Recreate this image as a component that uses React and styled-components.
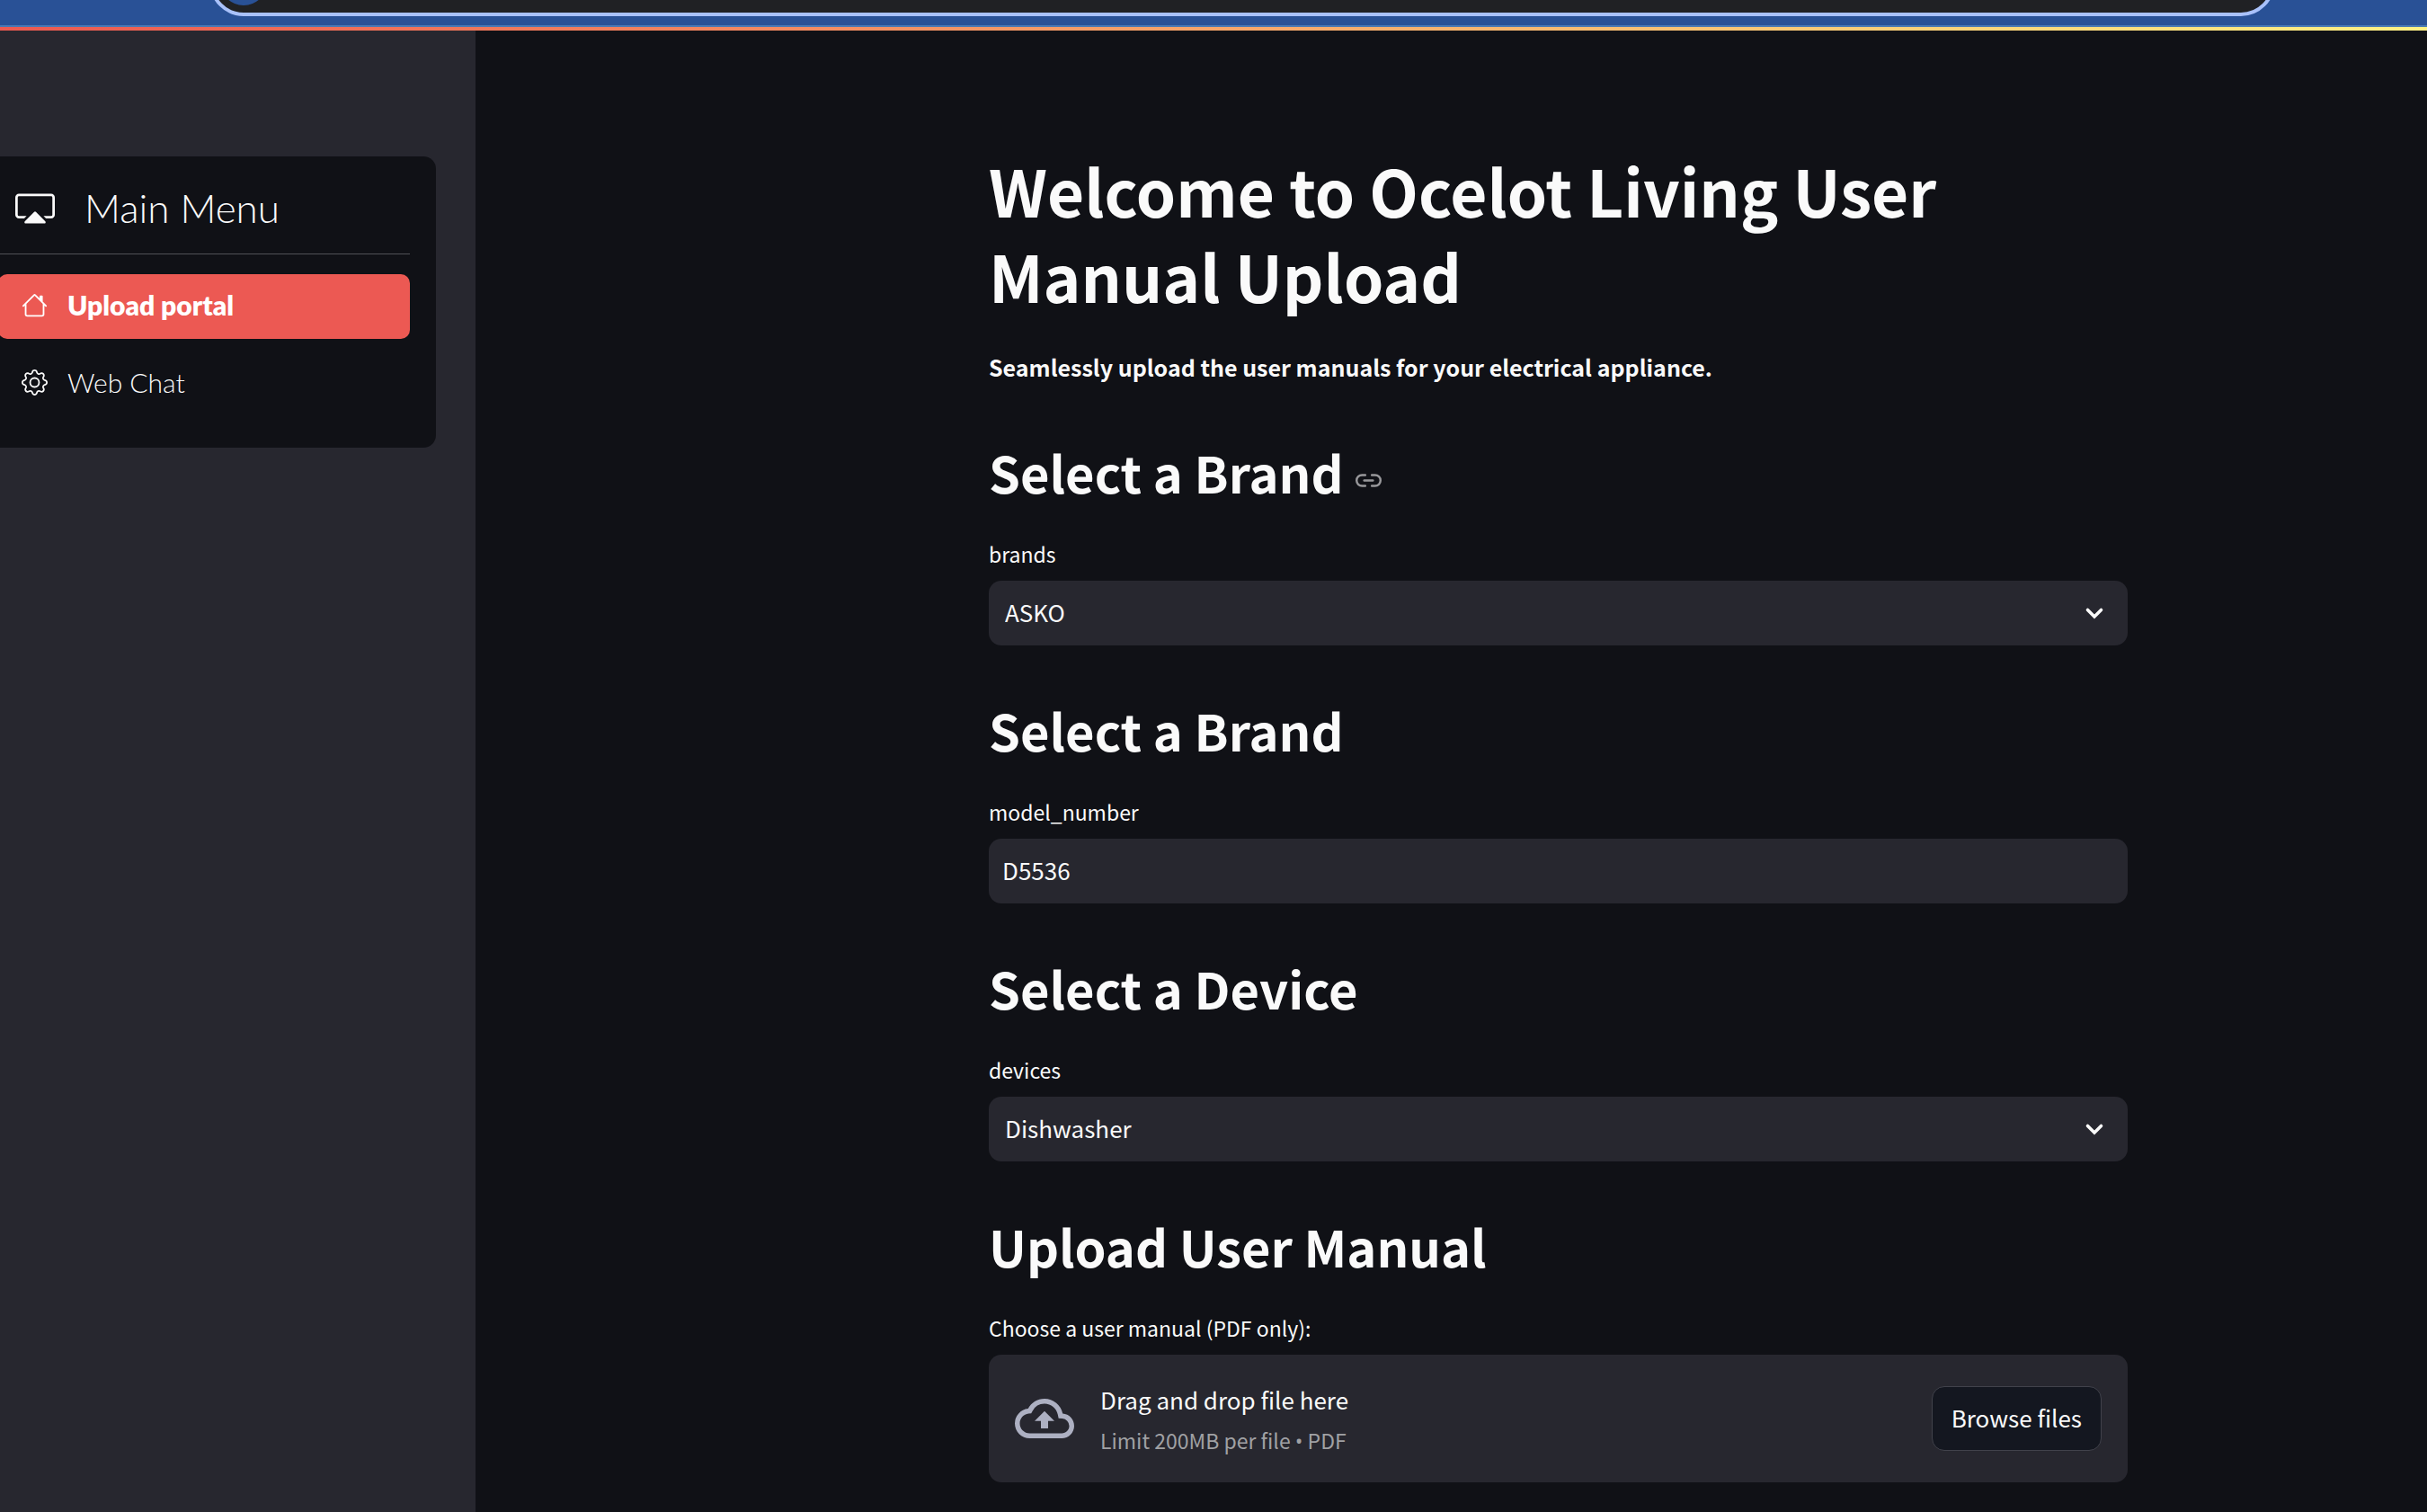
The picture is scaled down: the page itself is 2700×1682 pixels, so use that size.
import React, { useRef } from "react";
import styled, { createGlobalStyle } from "styled-components";
import { BsCast, BsHouse, BsGear } from "react-icons/bs";
import { FiLink2 } from "react-icons/fi";
import { MdOutlineCloudUpload } from "react-icons/md";

const color = {
  page: "#101116",
  panel: "#27272f",
  text: "#fafafa",
  muted: "#a0a1a4",
  icon: "#adb0c2",
  accent: "#ec5953",
  chrome: "#295196",
};

const bodyFont = `"Noto Sans CJK SC", "Open Sans", sans-serif`;
const menuFont = `Lato, "Open Sans", sans-serif`;

const GlobalStyle = createGlobalStyle`
  *, *::before, *::after { box-sizing: border-box; }
  body {
    margin: 0;
    background: ${color.page};
    color: ${color.text};
    font-family: ${bodyFont};
    font-size: 26px;
    line-height: 46px;
  }
  h1, h2, p, ul { margin: 0; padding: 0; }
`;

const Page = styled.div`
  display: flex;
  flex-direction: column;
  min-height: 100vh;
`;

const BrowserBar = styled.header`
  display: flex;
  align-items: flex-end;
  height: 30px;
  padding: 0 169px 10px 233px;
  overflow: hidden;
  background: ${color.chrome};
  border-bottom: 2px solid #4878b4;
`;

const AddressPill = styled.div`
  flex: 1;
  height: 76px;
  padding: 8px;
  border: 4px solid #a9c1fa;
  border-radius: 38px;
  background: #202124;
`;

const SiteBadge = styled.div`
  width: 52px;
  height: 52px;
  border-radius: 50%;
  background: ${color.chrome};
`;

const Decoration = styled.div`
  height: 4px;
  background: linear-gradient(90deg, #ed5950, #fff184);
`;

const Columns = styled.div`
  display: flex;
  flex: 1;
`;

const Sidebar = styled.aside`
  flex: 0 0 529px;
  padding: 140px 44px 0 0;
  background: ${color.panel};
`;

const Menu = styled.nav`
  display: flex;
  flex-direction: column;
  padding: 23px 29px 35px 0;
  border-radius: 0 14px 14px 0;
  background: ${color.page};
  font-family: ${menuFont};
`;

const MenuTitle = styled.div`
  display: flex;
  align-items: center;
  gap: 33px;
  padding: 4px 0 20px 17px;
  border-bottom: 1px solid #505156;
  font-size: 44px;
  font-weight: 300;
  line-height: 61px;
`;

const MenuList = styled.ul`
  display: flex;
  flex-direction: column;
  gap: 14px;
  margin: 22px 0 0 -2px;
  list-style: none;
`;

const MenuLink = styled.a`
  display: flex;
  align-items: center;
  gap: 22px;
  height: 72px;
  padding: 0 26px 4px;
  border-radius: 10px;
  background: ${(p) => (p.$active ? color.accent : "transparent")};
  color: ${(p) => (p.$active ? "#ffffff" : color.text)};
  font-size: 30px;
  font-weight: ${(p) => (p.$active ? 800 : 300)};
  text-decoration: none;
`;

const Main = styled.main`
  display: flex;
  flex: 1;
  flex-direction: column;
  gap: 55px;
  min-width: 0;
  padding: 130px 333px 32px 571px;
`;

const Intro = styled.header`
  display: flex;
  flex-direction: column;
  gap: 31px;
`;

const Title = styled.h1`
  font-size: 71px;
  font-weight: 700;
  line-height: 95px;
`;

const Lead = styled.p`
  font-size: 25px;
  font-weight: 700;
`;

const Section = styled.section`
  display: flex;
  flex-direction: column;
`;

const Heading = styled.h2`
  display: flex;
  align-items: center;
  gap: 14px;
  margin-bottom: 32px;
  font-size: 56px;
  font-weight: 600;
  line-height: 78px;
`;

const AnchorLink = styled.a`
  display: flex;
  padding-top: 18px;
  color: #98989b;
`;

const Label = styled.label`
  margin-bottom: 10px;
  font-size: 23px;
  line-height: 40px;
`;

const SelectBox = styled.div`
  display: grid;
  align-items: center;
  & > * { grid-area: 1 / 1; }
  & > svg {
    justify-self: end;
    margin-right: 26px;
    pointer-events: none;
  }
`;

const control = `
  width: 100%;
  height: 72px;
  border: 0;
  border-radius: 14px;
  background: ${color.panel};
  color: ${color.text};
  font: inherit;
  outline: none;
`;

const Select = styled.select`
  ${control}
  appearance: none;
  padding: 0 18px 3px;
`;

const TextInput = styled.input`
  ${control}
  padding: 0 15px 3px;
`;

const Dropzone = styled.div`
  display: flex;
  align-items: center;
  gap: 29px;
  height: 142px;
  padding: 0 29px;
  border-radius: 14px;
  background: ${color.panel};
  & > svg { flex: none; color: ${color.icon}; }
`;

const DropText = styled.div`
  display: flex;
  flex: 1;
  flex-direction: column;
  gap: 2px;
`;

const Hint = styled.p`
  color: ${color.muted};
  font-size: 23px;
  line-height: 40px;
`;

const Bullet = styled.span`
  font-family: "Open Sans", sans-serif;
`;

const BrowseButton = styled.button`
  height: 72px;
  padding: 0 21px 3px;
  border: 1px solid #41424b;
  border-radius: 14px;
  background: #141720;
  color: ${color.text};
  font: inherit;
`;

function Chevron() {
  return (
    <svg width="22" height="16" viewBox="0 0 22 16" fill="none" aria-hidden="true">
      <path d="M3.5 4.5 11 12l7.5-7.5" stroke="#fafafa" strokeWidth="3.6" strokeLinecap="round" />
    </svg>
  );
}

function SelectSection({ title, anchor, name, value }) {
  return (
    <Section>
      <Heading>
        {title}
        {anchor && (
          <AnchorLink href="#select-a-brand" aria-label="Link to heading">
            <FiLink2 size={29} />
          </AnchorLink>
        )}
      </Heading>
      <Label htmlFor={name}>{name}</Label>
      <SelectBox>
        <Select id={name} defaultValue={value}>
          <option>{value}</option>
        </Select>
        <Chevron />
      </SelectBox>
    </Section>
  );
}

export default function App() {
  const fileInput = useRef(null);
  return (
    <Page>
      <GlobalStyle />
      <BrowserBar>
        <AddressPill>
          <SiteBadge />
        </AddressPill>
      </BrowserBar>
      <Decoration />
      <Columns>
        <Sidebar>
          <Menu>
            <MenuTitle>
              <BsCast size={44} />
              Main Menu
            </MenuTitle>
            <MenuList>
              <li>
                <MenuLink href="#upload" $active>
                  <BsHouse size={29} />
                  Upload portal
                </MenuLink>
              </li>
              <li>
                <MenuLink href="#chat">
                  <BsGear size={29} />
                  Web Chat
                </MenuLink>
              </li>
            </MenuList>
          </Menu>
        </Sidebar>
        <Main>
          <Intro>
            <Title>Welcome to Ocelot Living User Manual Upload</Title>
            <Lead>Seamlessly upload the user manuals for your electrical appliance.</Lead>
          </Intro>
          <SelectSection title="Select a Brand" anchor name="brands" value="ASKO" />
          <Section>
            <Heading>Select a Brand</Heading>
            <Label htmlFor="model_number">model_number</Label>
            <TextInput id="model_number" type="text" defaultValue="D5536" />
          </Section>
          <SelectSection title="Select a Device" name="devices" value="Dishwasher" />
          <Section>
            <Heading>Upload User Manual</Heading>
            <Label htmlFor="manual">Choose a user manual (PDF only):</Label>
            <Dropzone>
              <MdOutlineCloudUpload size={66} />
              <DropText>
                <p>Drag and drop file here</p>
                <Hint>
                  Limit 200MB per file <Bullet>•</Bullet> PDF
                </Hint>
              </DropText>
              <input id="manual" ref={fileInput} type="file" accept="application/pdf" hidden />
              <BrowseButton type="button" onClick={() => fileInput.current.click()}>
                Browse files
              </BrowseButton>
            </Dropzone>
          </Section>
        </Main>
      </Columns>
    </Page>
  );
}
